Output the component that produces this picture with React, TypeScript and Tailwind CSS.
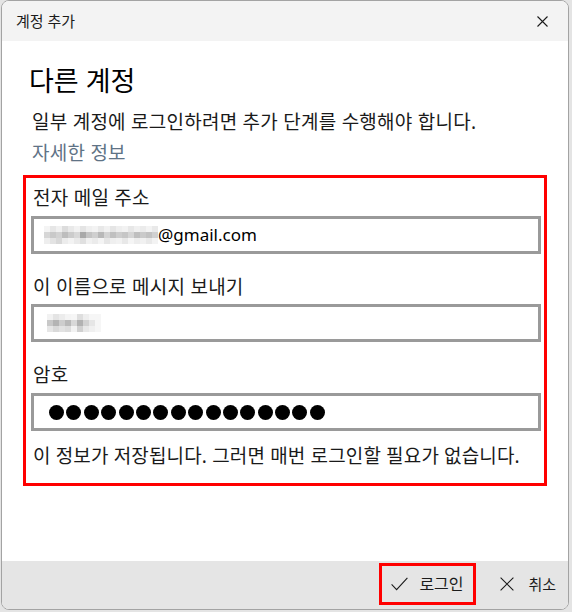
import React from "react";

const KR = { fontFamily: '"Noto Sans", "Noto Sans CJK KR", sans-serif' };

// blurred email prefix, drawn as a mosaic of grey cells
const emailMosaic = [
  ["#f4f4f4", "#e6e6e6", "#f0f0f0", "#dcdcdc", "#e9e9e9", "#f2f2f2", "#e4e4e4", "#efefef", "#f3f3f3", "#e8e8e8", "#f1f1f1", "#e5e5e5", "#eeeeee", "#f2f2f2", "#e7e7e7", "#f0f0f0", "#ebebeb", "#f3f3f3", "#e9e9e9"],
  ["#d6d6d6", "#c9c9c9", "#d2d2d2", "#bdbdbd", "#cccccc", "#d8d8d8", "#a9a9a9", "#c4c4c4", "#cfcfcf", "#b8b8b8", "#d3d3d3", "#c0c0c0", "#cdcdcd", "#c6c6c6", "#d5d5d5", "#bfbfbf", "#cacaca", "#c2c2c2", "#d0d0d0"],
  ["#eeeeee", "#e3e3e3", "#d8d8d8", "#ececec", "#f3f3f3", "#eaeaea", "#e0e0e0", "#f1f1f1", "#ebebeb", "#f4f4f4", "#e6e6e6", "#efefef", "#f2f2f2", "#e8e8e8", "#f5f5f5", "#ededed", "#f1f1f1", "#e9e9e9", "#f3f3f3"],
];

const nameMosaic = [
  ["#f2f2f2", "#e4e4e4", "#ececec", "#f4f4f4", "#f6f6f6", "#dedede", "#eeeeee", "#f6f6f6", "#f6f6f6"],
  ["#c8c8c8", "#b4b4b4", "#cdcdcd", "#b9b9b9", "#d8d8d8", "#b2b2b2", "#d2d2d2", "#e6e6e6", "#f6f6f6"],
  ["#e6e6e6", "#d9d9d9", "#e2e2e2", "#dcdcdc", "#f2f2f2", "#d0d0d0", "#e8e8e8", "#f0f0f0", "#f6f6f6"],
];

function Mosaic({ rows }: { rows: string[][] }) {
  return (
    <div className="flex flex-col">
      {rows.map((row, i) => (
        <div key={i} className="flex">
          {row.map((c, j) => (
            <span key={j} className="block w-[6px] h-[6px]" style={{ backgroundColor: c }} />
          ))}
        </div>
      ))}
    </div>
  );
}

function Field({ children }: { children: React.ReactNode }) {
  return (
    <div className="w-[510px] h-[38px] border-[3px] border-[#9a9a9a] bg-white flex items-center pl-[10px]">
      {children}
    </div>
  );
}

export default function App() {
  return (
    <div className="w-[572px] h-[612px] bg-[#e4e4e4] overflow-hidden" style={KR}>
      <div className="ml-[1px] w-[568px] h-[610px] border border-[#a3a3a3] rounded-lg overflow-hidden flex flex-col bg-white">
        {/* title bar */}
        <div className="h-[40px] bg-[#f3f3f3] flex items-center justify-between pl-[14px] pr-[20px]">
          <span className="text-[15px] leading-[20px] text-[#1b1b1b]">계정 추가</span>
          <svg width="11" height="11" viewBox="0 0 11 11" className="text-[#1b1b1b]">
            <path d="M0.5 0.5 L10.5 10.5 M10.5 0.5 L0.5 10.5" stroke="currentColor" strokeWidth="1.1" fill="none" />
          </svg>
        </div>

        {/* body */}
        <div className="flex-1 bg-white pl-[27px] pt-[23px] text-[19px] tracking-[0.25px]">
          <h1 className="text-[27px] leading-[34px] tracking-normal text-black font-normal">다른 계정</h1>
          <p className="mt-[11px] pl-[3px] leading-[26px] text-[#1a1a1a]">
            일부 계정에 로그인하려면 추가 단계를 수행해야 합니다.
          </p>
          <p className="mt-[5px] pl-[3px] leading-[26px] text-[#5f7386]">자세한 정보</p>

          <div className="mt-[9px] -ml-[6px] w-[524px] border-[3px] border-[#ff0000] pl-[5px] pr-[3px] pt-[7px] pb-[14px]">
            <div className="pl-[2px] leading-[26px] text-[#1a1a1a]">전자 메일 주소</div>
            <div className="mt-[5px]">
              <Field>
                <Mosaic rows={emailMosaic} />
                <span
                  className="text-[17px] leading-[24px] tracking-normal text-black"
                  style={{ fontFamily: '"Noto Sans", sans-serif' }}
                >
                  @gmail.com
                </span>
              </Field>
            </div>

            <div className="mt-[20px] pl-[2px] leading-[26px] text-[#1a1a1a]">이 이름으로 메시지 보내기</div>
            <div className="mt-[4px]">
              <Field>
                <div className="pl-[3px]">
                  <Mosaic rows={nameMosaic} />
                </div>
              </Field>
            </div>

            <div className="mt-[20px] pl-[2px] leading-[26px] text-[#1a1a1a]">암호</div>
            <div className="mt-[5px]">
              <Field>
                <div className="flex gap-[2.4px] pl-[5px]">
                  {Array.from({ length: 16 }).map((_, i) => (
                    <span key={i} className="block w-[15px] h-[15px] rounded-full bg-black" />
                  ))}
                </div>
              </Field>
            </div>

            <div className="mt-[12px] pl-[2px] leading-[26px] tracking-[0.15px] text-[#1a1a1a]">
              이 정보가 저장됩니다. 그러면 매번 로그인할 필요가 없습니다.
            </div>
          </div>
        </div>

        {/* footer */}
        <div className="h-[48px] bg-[#e5e5e5] flex justify-end items-start pt-[2px] pr-[12px]">
          <button className="w-[97px] h-[42px] border-[3px] border-[#ff0000] flex items-center pl-[9px] gap-[11px]">
            <svg width="17" height="14" viewBox="0 0 17 14">
              <path d="M0.6 7.4 L5.6 12.6 L16.4 0.8" stroke="#1b1b1b" strokeWidth="1.1" fill="none" />
            </svg>
            <span className="text-[16px] leading-[20px] text-[#1b1b1b]">로그인</span>
          </button>
          <div className="h-[42px] ml-[24px] flex items-center gap-[14px]">
            <svg width="14" height="14" viewBox="0 0 14 14">
              <path d="M0.6 0.6 L13.4 13.4 M13.4 0.6 L0.6 13.4" stroke="#1b1b1b" strokeWidth="1.1" fill="none" />
            </svg>
            <span className="text-[15px] leading-[20px] text-[#1b1b1b]">취소</span>
          </div>
        </div>
      </div>
    </div>
  );
}
